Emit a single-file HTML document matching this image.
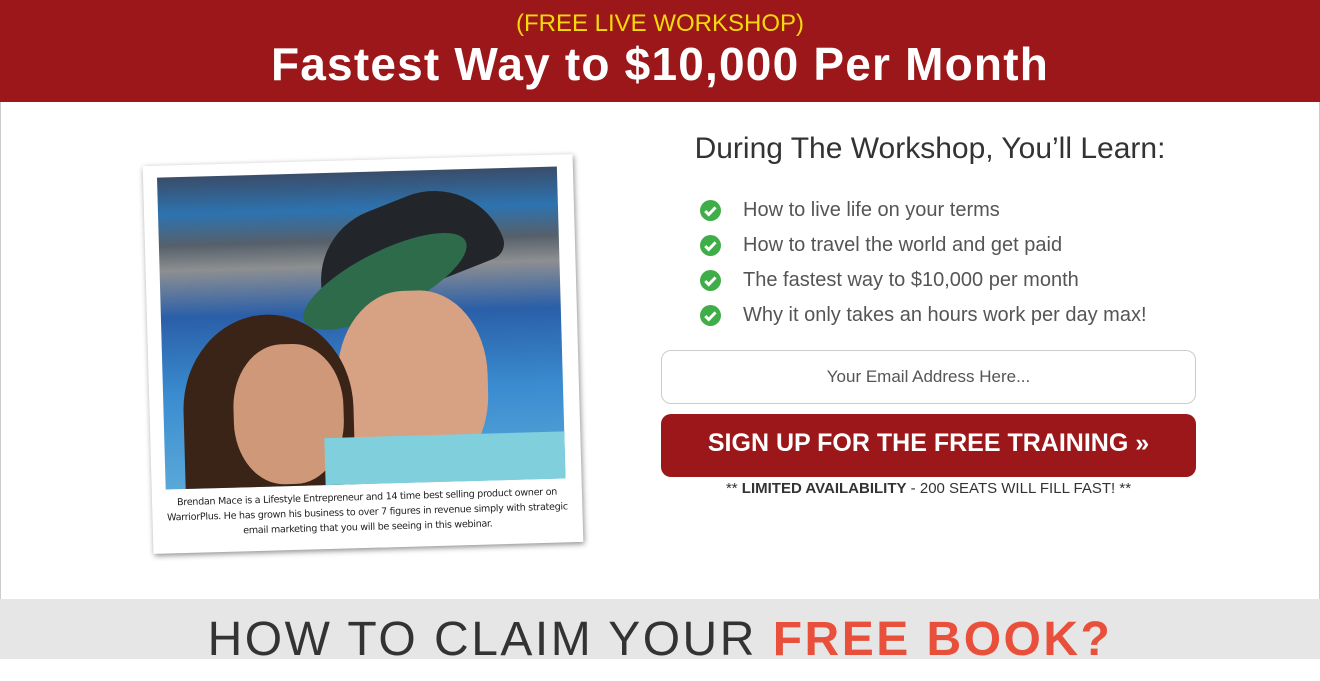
<!DOCTYPE html>
<html><head><style>
*{margin:0;padding:0;box-sizing:border-box}
body{width:1320px;height:659px;overflow:hidden;background:#fff;font-family:"Liberation Sans",sans-serif;position:relative}
.top{position:absolute;left:0;top:0;width:1320px;height:102px;background:#9c1719;text-align:center}
.top .a{color:#f5d90a;font-size:24px;padding-top:10px;line-height:28px}
.top .b{color:#fff;font-size:46px;font-weight:bold;line-height:52px;letter-spacing:1.2px}
.frame{position:absolute;left:0;top:102px;width:1320px;height:497px;border-left:1px solid #ccc;border-right:1px solid #ccc}
.pol{position:absolute;left:148px;top:160px;width:430px;height:388px;background:#fff;transform:rotate(-1.6deg);box-shadow:1px 2px 6px rgba(0,0,0,.45)}
.ph{position:absolute;left:14px;top:12px;width:400px;height:312px;overflow:hidden;background:linear-gradient(180deg,#3a4d6a 0,#2d73b0 12%,#56606a 22%,#8d8f91 30%,#2a5fa8 45%,#3a8cd0 70%,#5aa8d8 100%)}
.cap{position:absolute;left:4px;right:4px;top:330px;font-size:9.6px;line-height:15px;text-align:center;color:#222;font-family:"DejaVu Sans",sans-serif;letter-spacing:-0.3px}
h2{position:absolute;left:660px;width:540px;top:132px;text-align:center;font-weight:normal;font-size:30px;color:#333}
ul{position:absolute;left:700px;top:193px;list-style:none}
li{height:35px;font-size:20px;color:#555;display:flex;align-items:center}
li svg{margin-right:22px}
.in{position:absolute;left:661px;top:350px;width:535px;height:54px;border:1px solid #ccc;border-radius:10px;text-align:center;line-height:52px;color:#555;font-size:17px}
.btn{position:absolute;left:661px;top:414px;width:535px;height:63px;border-radius:10px;background:#9c1719;color:#fff;text-align:center;line-height:58px;font-weight:bold;font-size:25px}
.lim{position:absolute;left:661px;width:535px;top:480px;text-align:center;font-size:15px;color:#333}
.bot{position:absolute;left:0;top:599px;width:1320px;height:60px;background:#e6e6e6;text-align:center;font-size:48px;color:#333;line-height:82px;letter-spacing:2.5px}
.bot b{color:#e9503b}
</style></head><body>
<div class="top"><div class="a">(FREE LIVE WORKSHOP)</div><div class="b">Fastest Way to $10,000 Per Month</div></div>
<div class="frame"></div>
<div class="pol"><div class="ph">
<div style="position:absolute;left:150px;top:30px;width:190px;height:90px;background:#22262a;border-radius:90px 90px 20px 20px;transform:rotate(-20deg)"></div>
<div style="position:absolute;left:135px;top:80px;width:180px;height:60px;background:#2e6b4a;border-radius:50%;transform:rotate(-25deg)"></div>
<div style="position:absolute;left:175px;top:120px;width:150px;height:190px;background:#d7a283;border-radius:45%"></div>
<div style="position:absolute;left:20px;top:140px;width:170px;height:190px;background:#3a2418;border-radius:50% 50% 10% 10%"></div>
<div style="position:absolute;left:70px;top:170px;width:110px;height:140px;background:#cf9878;border-radius:45%"></div>
<div style="position:absolute;left:160px;top:265px;width:240px;height:60px;background:#7fd0dc"></div>
</div>
<div class="cap">Brendan Mace is a Lifestyle Entrepreneur and 14 time best selling product owner on WarriorPlus. He has grown his business to over 7 figures in revenue simply with strategic email marketing that you will be seeing in this webinar.</div></div>
<h2>During The Workshop, You’ll Learn:</h2>
<ul>
<li><svg width="21" height="21" viewBox="0 0 20 20"><circle cx="10" cy="10" r="10" fill="#3fae49"/><path d="M5 10.5l3.3 3.3 6.5-6.8" stroke="#fff" stroke-width="2.8" fill="none"/></svg>How to live life on your terms</li>
<li><svg width="21" height="21" viewBox="0 0 20 20"><circle cx="10" cy="10" r="10" fill="#3fae49"/><path d="M5 10.5l3.3 3.3 6.5-6.8" stroke="#fff" stroke-width="2.8" fill="none"/></svg>How to travel the world and get paid</li>
<li><svg width="21" height="21" viewBox="0 0 20 20"><circle cx="10" cy="10" r="10" fill="#3fae49"/><path d="M5 10.5l3.3 3.3 6.5-6.8" stroke="#fff" stroke-width="2.8" fill="none"/></svg>The fastest way to $10,000 per month</li>
<li><svg width="21" height="21" viewBox="0 0 20 20"><circle cx="10" cy="10" r="10" fill="#3fae49"/><path d="M5 10.5l3.3 3.3 6.5-6.8" stroke="#fff" stroke-width="2.8" fill="none"/></svg>Why it only takes an hours work per day max!</li>
</ul>
<div class="in">Your Email Address Here...</div>
<div class="btn">SIGN UP FOR THE FREE TRAINING »</div>
<div class="lim">** <b>LIMITED AVAILABILITY</b> - 200 SEATS WILL FILL FAST! **</div>
<div class="bot">HOW TO CLAIM YOUR <b>FREE BOOK?</b></div>
</body></html>
